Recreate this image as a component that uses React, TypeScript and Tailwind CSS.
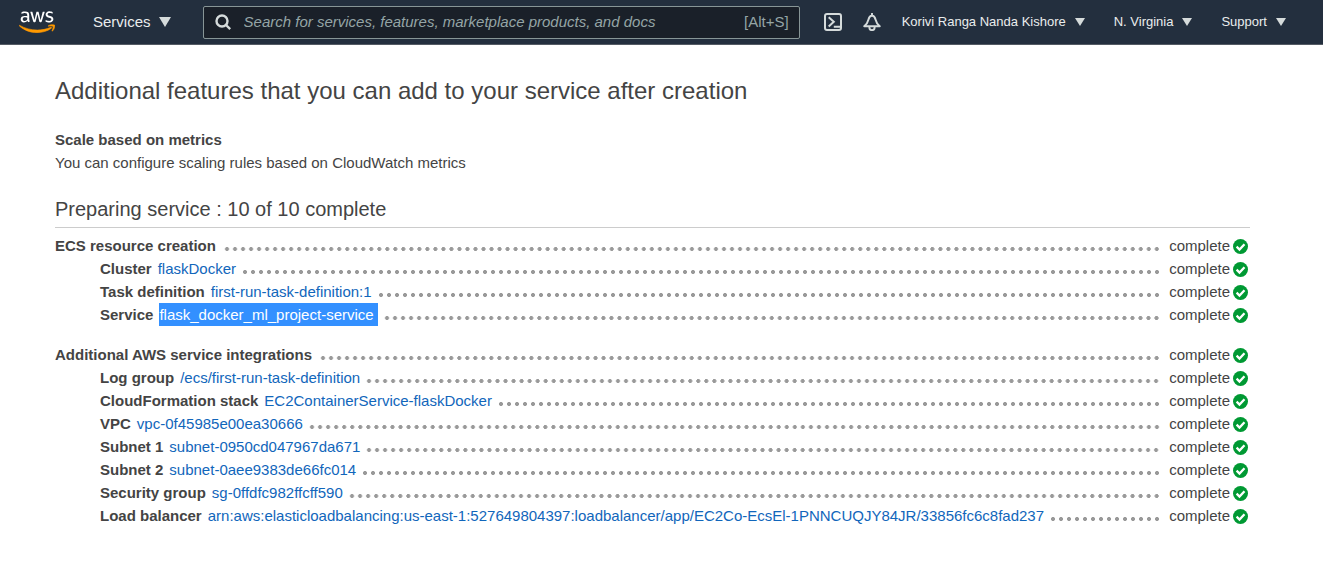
import React from "react";

type Item = { label: string; value: string; selected?: boolean };
type Group = { title: string; items: Item[] };

const groups: Group[] = [
  {
    title: "ECS resource creation",
    items: [
      { label: "Cluster", value: "flaskDocker" },
      { label: "Task definition", value: "first-run-task-definition:1" },
      { label: "Service", value: "flask_docker_ml_project-service", selected: true },
    ],
  },
  {
    title: "Additional AWS service integrations",
    items: [
      { label: "Log group", value: "/ecs/first-run-task-definition" },
      { label: "CloudFormation stack", value: "EC2ContainerService-flaskDocker" },
      { label: "VPC", value: "vpc-0f45985e00ea30666" },
      { label: "Subnet 1", value: "subnet-0950cd047967da671" },
      { label: "Subnet 2", value: "subnet-0aee9383de66fc014" },
      { label: "Security group", value: "sg-0ffdfc982ffcff590" },
      {
        label: "Load balancer",
        value:
          "arn:aws:elasticloadbalancing:us-east-1:527649804397:loadbalancer/app/EC2Co-EcsEl-1PNNCUQJY84JR/33856fc6c8fad237",
      },
    ],
  },
];

function Caret({ large = false }: { large?: boolean }) {
  return (
    <svg viewBox="0 0 12 10" preserveAspectRatio="none" className={large ? "h-[10px] w-3" : "h-2 w-[10px]"} fill="#d5dbdb" aria-hidden="true">
      <path d="M0 0h12L6 10z" />
    </svg>
  );
}

function AwsLogo() {
  return (
    <svg viewBox="0 0 304 182" className="h-[22px] w-9" aria-hidden="true">
      <path
        fill="#fff"
        d="M86.4 66.4c0 3.7.4 6.7 1.1 8.9.8 2.2 1.8 4.6 3.2 7.2.5.8.7 1.6.7 2.3 0 1-.6 2-1.9 3l-6.3 4.2c-.9.6-1.8.9-2.6.9-1 0-2-.5-3-1.4-1.4-1.5-2.6-3.1-3.6-4.7-1-1.7-2-3.6-3.1-5.9-7.8 9.2-17.6 13.8-29.4 13.8-8.4 0-15.1-2.4-20-7.2-4.9-4.8-7.4-11.2-7.4-19.2 0-8.5 3-15.4 9.1-20.6 6.1-5.2 14.2-7.8 24.5-7.8 3.4 0 6.9.3 10.6.8 3.7.5 7.5 1.3 11.5 2.2v-7.3c0-7.6-1.6-12.9-4.7-16-3.2-3.1-8.6-4.6-16.3-4.6-3.5 0-7.1.4-10.8 1.3-3.7.9-7.3 2-10.8 3.4-1.6.7-2.8 1.1-3.5 1.3-.7.2-1.2.3-1.6.3-1.4 0-2.1-1-2.1-3.1v-4.9c0-1.6.2-2.8.7-3.5.5-.7 1.4-1.4 2.8-2.1 3.5-1.8 7.7-3.3 12.6-4.500C41 1.900 46.200 1.300 51.700 1.300c11.900 0 20.600 2.700 26.200 8.100 5.500 5.400 8.300 13.600 8.300 24.600v32.400zM45.800 81.600c3.300 0 6.700-.6 10.300-1.800 3.600-1.200 6.800-3.400 9.500-6.400 1.600-1.900 2.800-4 3.400-6.400.6-2.400 1-5.300 1-8.700v-4.200c-2.900-.7-6-1.300-9.200-1.700-3.200-.4-6.300-.6-9.400-.6-6.700 0-11.600 1.300-14.900 4-3.300 2.700-4.900 6.500-4.900 11.500 0 4.700 1.200 8.200 3.700 10.600 2.400 2.500 5.900 3.700 10.500 3.700zm80.300 10.800c-1.800 0-3-.3-3.800-1-.8-.6-1.500-2-2.100-3.900L96.700 10.200c-.6-2-.9-3.300-.9-4 0-1.600.8-2.500 2.400-2.500h9.800c1.900 0 3.200.3 3.900 1 .8.6 1.400 2 2 3.900l16.800 66.200 15.600-66.200c.5-2 1.100-3.300 1.900-3.900.8-.6 2.200-1 4-1h8c1.900 0 3.200.3 4 1 .8.6 1.500 2 1.900 3.900l15.800 67 17.300-67c.6-2 1.300-3.300 2-3.900.8-.6 2.100-1 3.900-1h9.300c1.600 0 2.500.8 2.500 2.500 0 .5-.1 1-.2 1.600-.1.600-.3 1.400-.7 2.500l-24.100 77.300c-.6 2-1.300 3.300-2.100 3.900-.8.6-2.100 1-3.800 1h-8.600c-1.900 0-3.200-.3-4-1-.8-.7-1.500-2-1.900-4L156 23l-15.400 64.400c-.5 2-1.100 3.300-1.900 4-.8.700-2.200 1-4 1zm128.500 2.700c-5.200 0-10.400-.6-15.400-1.800-5-1.200-8.900-2.500-11.500-4-1.600-.9-2.700-1.900-3.100-2.800-.4-.9-.6-1.900-.6-2.800v-5.100c0-2.100.8-3.100 2.300-3.100.6 0 1.200.1 1.800.3.6.2 1.500.6 2.500 1 3.400 1.500 7.100 2.700 11 3.500 4 .8 7.900 1.200 11.900 1.200 6.300 0 11.200-1.100 14.600-3.300 3.400-2.200 5.200-5.400 5.200-9.500 0-2.800-.9-5.100-2.700-7-1.800-1.900-5.200-3.600-10.100-5.200L246 52c-7.300-2.300-12.700-5.700-16-10.200-3.300-4.400-5-9.300-5-14.500 0-4.200.9-7.900 2.700-11.100 1.800-3.200 4.200-6 7.200-8.200 3-2.300 6.400-4 10.400-5.200 4-1.200 8.200-1.700 12.600-1.700 2.200 0 4.500.1 6.700.4 2.300.3 4.400.7 6.500 1.100 2 .5 3.900 1 5.700 1.600 1.800.6 3.200 1.200 4.200 1.800 1.400.8 2.400 1.600 3 2.500.6.800.9 1.900.9 3.300v4.700c0 2.100-.8 3.200-2.300 3.200-.8 0-2.100-.4-3.800-1.200-5.700-2.600-12.100-3.900-19.200-3.900-5.700 0-10.200.9-13.300 2.800-3.100 1.900-4.700 4.800-4.700 8.900 0 2.800 1 5.200 3 7.100 2 1.900 5.700 3.800 11 5.500l14.200 4.500c7.200 2.300 12.400 5.500 15.500 9.600 3.100 4.100 4.600 8.800 4.600 14 0 4.300-.9 8.200-2.600 11.600-1.800 3.400-4.200 6.400-7.300 8.800-3.100 2.500-6.800 4.300-11.100 5.600-4.500 1.400-9.200 2.100-14.300 2.100z"
      />
      <path
        fill="#f90"
        stroke="#f90"
        strokeWidth="5"
        d="M273.500 143.700c-32.900 24.300-80.700 37.200-121.800 37.200-57.600 0-109.500-21.300-148.700-56.700-3.100-2.800-.3-6.600 3.400-4.400 42.400 24.600 94.700 39.500 148.800 39.500 36.500 0 76.600-7.600 113.500-23.200 5.500-2.500 10.200 3.600 4.800 7.600zM287.200 128.100c-4.200-5.400-27.800-2.600-38.500-1.300-3.200.4-3.700-2.400-.8-4.500 18.800-13.200 49.700-9.400 53.300-5 3.600 4.500-1 35.400-18.600 50.200-2.700 2.300-5.300 1.100-4.100-1.900 4-9.900 12.900-32.200 8.700-37.500z"
      />
    </svg>
  );
}

function Status() {
  return (
    <span className="flex items-center gap-[3px]">
      complete
      <svg viewBox="0 0 15 15" className="mt-[2px] size-[15px]" aria-hidden="true">
        <circle cx="7.500" cy="7.500" r="7.500" fill="#093" />
        <path d="M3.600 7.600l2.900 2.900 5-5.300" fill="none" stroke="#fff" strokeWidth="2.300" />
      </svg>
    </span>
  );
}

function Leader() {
  return (
    <span className="ml-[5px] mr-2 mt-[7px] h-1 min-w-4 flex-1 bg-[radial-gradient(circle,#999_1.7px,transparent_2.3px)] bg-[length:8px_4px] bg-repeat-space" />
  );
}

export default function App() {
  return (
    <div className="font-['Liberation_Sans',Arial,sans-serif] text-[#444]">
      <header className="flex h-[45px] items-center border-b border-[#545b64] bg-[#232f3e] pr-[37px] text-[13px] text-[#eaeded]">
        <a href="#home" aria-label="AWS" className="ml-[19px]">
          <AwsLogo />
        </a>
        <button className="ml-[38px] flex items-center gap-2 text-[15px]">
          Services <Caret large />
        </button>
        <label className="ml-8 flex h-[33px] flex-1 items-center rounded-xs border border-[#879596] bg-[#1a2029] px-[10px] text-[15px] text-[#95a5a6]">
          <svg viewBox="0 0 18 18" className="mr-3 size-[18px]" fill="none" stroke="#d5dbdb" strokeWidth="2.400" aria-hidden="true">
            <circle cx="8" cy="8" r="5.500" />
            <path d="M12 12l4.200 4.200" />
          </svg>
          <input
            aria-label="Search"
            placeholder="Search for services, features, marketplace products, and docs"
            className="min-w-0 flex-1 bg-transparent italic outline-none placeholder:text-[#95a5a6]"
          />
          <span>[Alt+S]</span>
        </label>
        <button aria-label="CloudShell" className="ml-6">
          <svg viewBox="0 0 18 18" className="size-[18px]" fill="none" stroke="#d5dbdb" strokeWidth="2" aria-hidden="true">
            <rect x="1" y="1" width="16" height="16" rx="2" />
            <path d="M4.700 4.200L9.800 8.800l-5.100 4.700M9.800 13.800H16" />
          </svg>
        </button>
        <button aria-label="Notifications" className="ml-[21px]">
          <svg viewBox="0 0 18 18" className="size-[18px]" fill="none" stroke="#d5dbdb" strokeWidth="1.900" strokeLinejoin="round" aria-hidden="true">
            <path d="M9 0v2.500M9 2.500C7 2.800 5.900 4.500 5.400 6.800 4.800 9.500 3.500 11.500 1.200 13.200h15.600C14.500 11.500 13.200 9.500 12.600 6.800 12.100 4.500 11 2.800 9 2.500z" />
            <path d="M6.400 13.500v1a2.600 2.600 0 0 0 5.200 0v-1" />
          </svg>
        </button>
        <button className="ml-[21px] flex items-center gap-[9px]">
          Korivi Ranga Nanda Kishore <Caret />
        </button>
        <button className="ml-[29px] flex items-center gap-[9px]">
          N. Virginia <Caret />
        </button>
        <button className="ml-[29px] flex items-center gap-[9px]">
          Support <Caret />
        </button>
      </header>

      <main className="ml-[55px] mr-[73px] pt-[30px] text-[15px] leading-[23px]">
        <h1 className="text-[24px] leading-8">Additional features that you can add to your service after creation</h1>
        <h2 className="mt-[21px] font-bold">Scale based on metrics</h2>
        <p>You can configure scaling rules based on CloudWatch metrics</p>

        <h2 className="mt-[21px] border-b border-[#ccc] pb-1 text-[20px] leading-7">Preparing service : 10 of 10 complete</h2>
        <div className="flex flex-col gap-[17px] pt-[6px]">
          {groups.map((group) => (
            <section key={group.title}>
              <div className="flex items-center pr-[2px]">
                <h3 className="mr-[2px] font-bold">{group.title}</h3>
                <Leader />
                <Status />
              </div>
              <ul className="pl-[45px]">
                {group.items.map((item) => (
                  <li key={item.label} className="flex items-center pr-[2px]">
                    <span className="mr-[6px] font-bold">{item.label}</span>
                    <a
                      href="#resource"
                      className={item.selected ? "bg-[#3390ff] pr-1 text-white" : "text-[#1166bb]"}
                    >
                      {item.value}
                    </a>
                    <Leader />
                    <Status />
                  </li>
                ))}
              </ul>
            </section>
          ))}
        </div>
      </main>
    </div>
  );
}
